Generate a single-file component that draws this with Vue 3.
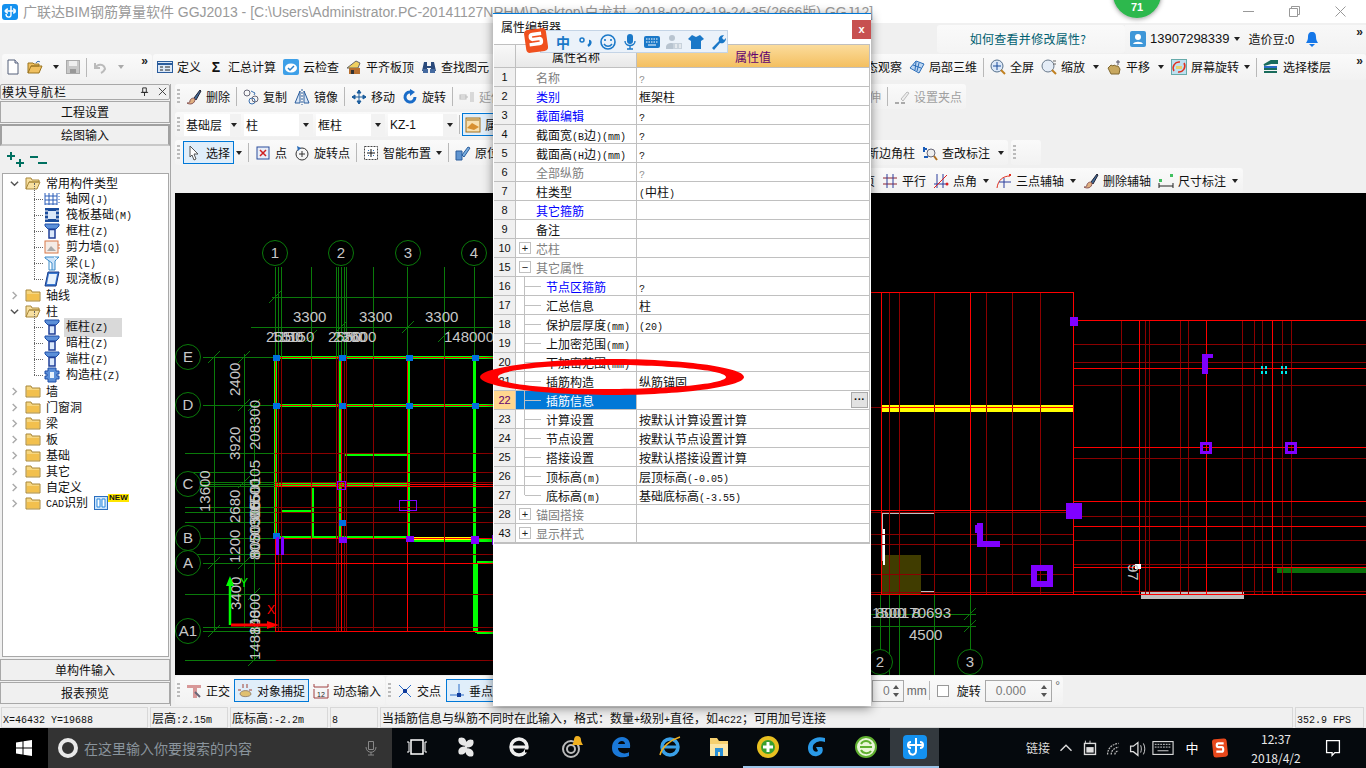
<template>
  <div class="app">
    <header class="titlebar">
      <svg class="app-logo" viewBox="0 0 16 16" v-html="icons.glodon" />
      <span class="title-text">广联达BIM钢筋算量软件 GGJ2013 - [C:\Users\Administrator.PC-20141127NRHM\Desktop\白龙村_2018-02-02-19-24-35(2666版).GGJ12]</span>
      <div class="win-btns">
        <svg viewBox="0 0 11 11"><path d="M0 5.500h11" stroke="#999" fill="none" /></svg>
        <svg viewBox="0 0 11 11"><path d="M.5 2.500h8v8h-8zM2.500 2.500v-2h8v8h-2" stroke="#999" fill="none" /></svg>
        <svg viewBox="0 0 11 11"><path d="M.5.5l10 10M10.500.5l-10 10" stroke="#999" fill="none" /></svg>
      </div>
    </header>

    <div class="menubar">
      <div class="help-tab">如何查看并修改属性?</div>
      <div class="account">
        <svg class="ic" viewBox="0 0 16 16"><rect width="16" height="16" rx="2" fill="#3f97d8" /><circle cx="8" cy="6" r="3" fill="#fff" /><path d="M3 13c1-3 9-3 10 0z" fill="#fff" /></svg>
        <span class="phone">13907298339</span>
        <i class="caret phone-caret" />
        <span class="beans">造价豆:0</span>
        <svg class="ic bell" viewBox="0 0 16 16"><path d="M8 1c-3 0-4 2-4 5 0 3-1 4-2 6h12c-1-2-2-3-2-6 0-3-1-5-4-5z" fill="#1577e8" /><path d="M5 13h6l-3 3z" fill="#1577e8" /></svg>
        <span class="more menu-more">»</span>
      </div>
    </div>

    <div class="toprow">
      <div class="band band-files">
        <template v-for="(it, i) in fileTools" :key="i">
          <span v-if="it.sep" class="sep" />
          <div v-else class="tool">
            <svg class="ic" viewBox="0 0 16 16" v-html="icons[it.i]" />
            <i v-if="it.arrow" class="caret" :class="{ dim: it.dim }" />
          </div>
        </template>
        <span class="more">»</span>
      </div>
      <div class="band band-main">
        <template v-for="(it, i) in topLeft" :key="i">
          <div class="tool">
            <svg v-if="it.i" class="ic" viewBox="0 0 16 16" v-html="icons[it.i]" />
            <b v-else class="sigma">Σ</b>
            <span>{{ it.t }}</span>
          </div>
        </template>
      </div>
      <div class="band band-topright">
        <template v-for="(it, i) in topRight" :key="i">
          <span v-if="it.sep" class="sep" />
          <div v-else class="tool">
            <svg v-if="it.i" class="ic" viewBox="0 0 16 16" v-html="icons[it.i]" />
            <span v-if="it.t">{{ it.t }}</span>
            <i v-if="it.arrow" class="caret" :class="{ near: it.near }" />
          </div>
        </template>
        <span class="more">»</span>
      </div>
    </div>

    <div class="main">
      <aside class="nav">
        <div class="nav-head">
          <span>模块导航栏</span>
          <svg class="nav-pin" viewBox="0 0 10 10"><path d="M3 1h4v5H3zM1 6h8M5 6v4" stroke="#222" fill="none" /></svg>
          <svg class="nav-close" viewBox="0 0 10 10"><path d="M1 1l8 8M9 1L1 9" stroke="#333" fill="none" /></svg>
        </div>
        <div class="nav-btn">工程设置</div>
        <div class="nav-btn pressed">绘图输入</div>
        <div class="nav-tools">
          <svg viewBox="0 0 18 18"><path d="M0 5h8M4 1v8" stroke="#007060" stroke-width="2" /><path d="M9 12h8M13 8v8" stroke="#007060" stroke-width="2" /></svg>
          <svg viewBox="0 0 18 18"><path d="M0 6h8" stroke="#007060" stroke-width="2" /><path d="M8 12h9" stroke="#007060" stroke-width="2" /></svg>
        </div>
        <div class="tree">
          <div v-for="(n, i) in tree" :key="i" class="node" :class="{ sub: n.lv === 1 }">
            <template v-if="n.lv === 0">
              <svg class="chev" viewBox="0 0 10 10"><path :d="n.open ? 'M1 3l4 4 4-4' : 'M3 1l4 4-4 4'" :stroke="n.open ? '#555' : '#aaa'" stroke-width="1.600" fill="none" /></svg>
              <svg class="ic folder" viewBox="0 0 16 16" v-html="n.open ? icons.folderOpen : icons.folder" />
            </template>
            <svg v-else class="ic leaf" viewBox="0 0 16 16" v-html="icons[n.i]" />
            <span class="node-label" :class="{ picked: n.sel }">
              <span v-for="(p, k) in parts(n.t)" :key="k" :class="{ lat: isLat(p) }">{{ p }}</span>
            </span>
            <template v-if="n.isNew">
              <svg class="cad-ic" viewBox="0 0 14 14"><rect x=".5" y=".5" width="13" height="13" fill="#cde4fa" stroke="#2a6fc0" /><path d="M3 3h3v8H3zM8 3h3v8H8z" fill="#fff" stroke="#2a8ae0" /></svg>
              <span class="new-tag">NEW</span>
            </template>
          </div>
        </div>
        <div class="nav-btn low">单构件输入</div>
        <div class="nav-btn">报表预览</div>
      </aside>

      <section class="work">
        <div v-for="(row, r) in rows" :key="r" class="tbrow">
          <div v-for="(band, b) in row" :key="b" class="band" :class="band.cls">
            <span v-if="band.grip" class="grip" />
            <template v-for="(it, i) in band.items" :key="i">
              <span v-if="it.sep" class="sep" />
              <div v-else-if="it.combo" class="combo" :class="{ latin: it.latin, short: it.short }">
                <span>{{ it.combo }}</span><i class="caret" />
              </div>
              <div v-else class="tool" :class="{ on: it.on, faded: it.faded, 'arrow-only': it.arrowOnly }">
                <svg v-if="it.i" class="ic" viewBox="0 0 16 16" v-html="icons[it.i]" />
                <span v-if="it.t">{{ it.t }}</span>
                <i v-if="it.arrow" class="caret" :class="{ near: it.near }" />
              </div>
            </template>
          </div>
        </div>

        <svg class="canvas" viewBox="175 193 1191 482">
          <g shape-rendering="crispEdges" transform="translate(.5 .5)">
            <rect x="880" y="554" width="40" height="39" fill="#403c00" />
            <path v-for="(l, i) in greenThick" :key="'t' + i" :d="l" stroke="#00ff00" stroke-width="3" fill="none" />
            <rect x="880" y="404" width="193" height="7" fill="#ffff00" />
            <rect x="408" y="536" width="66" height="3" fill="#ffff00" />
            <rect x="1276" y="567" width="90" height="5" fill="#0a700a" />
            <rect x="1140" y="591" width="103" height="7" fill="#c0c0c0" />
            <path d="M934 512H881V560M934 591H920" stroke="#c0c0c0" stroke-width="2" fill="none" />
            <path d="M883 528V564" stroke="#fff" stroke-width="2" fill="none" />
            <path v-for="(l, i) in darkGreen" :key="'g' + i" :d="l" stroke="#0a7a0a" fill="none" />
            <path v-for="(l, i) in darkRed" :key="'d' + i" :d="l" stroke="#8b0000" fill="none" />
            <path v-for="(l, i) in brightRed" :key="'r' + i" :d="l" stroke="#ff0000" fill="none" />
            <rect v-for="(p, i) in blueMarks" :key="'b' + i" :x="p[0] - 3" :y="p[1] - 3" width="7" height="6" fill="#0070e0" />
            <path d="M1069 316h8v9h-8zM1065 502h16v16h-16zM1201 353h11v4h-5v16h-6zM976 522h6v18h17v6h-23v-14h-2v-8h2zM275 536h3v18h-3zM280 536h3v18h-3zM338 536h8v6h-8zM405 535h8v6h-8zM470 535h8v8h-8zM491 534h3v10h-3z" fill="#7f00ff" />
            <path d="M1201 443h9v9h-9zM1286 443h9v9h-9z" stroke="#7f00ff" stroke-width="3" fill="none" />
            <path d="M1033 567h16v16h-16z" stroke="#7f00ff" stroke-width="6" fill="none" />
            <path d="M399 500h17v10h-17zM337 481h8v8h-8z" stroke="#7f00ff" stroke-width="1.500" fill="none" />
            <path d="M1260 365h2v3h-2zM1264 365h2v3h-2zM1260 370h2v3h-2zM1264 370h2v3h-2zM1280 365h2v3h-2zM1284 365h2v3h-2zM1280 370h2v3h-2zM1284 370h2v3h-2z" fill="#00e8e8" />
            <rect x="1134" y="563" width="6" height="5" fill="#fff" />
          </g>
          <path v-for="(t, i) in ticks" :key="'k' + i" :d="`M${t[0] - 6} ${t[1] + 6}L${t[0] + 6} ${t[1] - 6}`" stroke="#0a7a0a" fill="none" />
          <g v-for="(c, i) in bubbles" :key="'c' + i">
            <circle :cx="c.x" :cy="c.y" r="12.500" fill="#000" stroke="#0a7a0a" />
            <text class="dim bubble" :x="c.x" :y="c.y + 5">{{ c.t }}</text>
          </g>
          <text v-for="(t, i) in dimsH" :key="'h' + i" class="dim" :x="t[0]" :y="t[1]">{{ t[2] }}</text>
          <text v-for="(t, i) in dimsV" :key="'v' + i" class="dim" :transform="`rotate(-90 ${t[0]} ${t[1]})`" :x="t[0]" :y="t[1]">{{ t[2] }}</text>
          <text class="dim" transform="rotate(90 1128 564)" x="1128" y="564">97</text>
          <path d="M230 625V583" stroke="#00ff00" stroke-width="2.500" fill="none" /><path d="M230 576l-4 10h8z" fill="#00ff00" />
          <path d="M231 625h36" stroke="#ff0000" stroke-width="3" fill="none" /><path d="M279 625l-12-4v8z" fill="#ff0000" />
          <text class="axis axis-y" x="240" y="587">Y</text>
          <text class="axis axis-x" x="267" y="614">X</text>
        </svg>

        <div class="tbrow bottomrow">
          <div class="band bb-a">
            <span class="grip" />
            <div v-for="it in bottomA" :key="it.t" class="tool" :class="{ on: it.on }">
              <svg class="ic" viewBox="0 0 16 16" v-html="icons[it.i]" /><span>{{ it.t }}</span>
            </div>
          </div>
          <div class="band bb-b">
            <span class="grip" />
            <div v-for="it in bottomB" :key="it.t" class="tool" :class="{ on: it.on }">
              <svg class="ic" viewBox="0 0 16 16" v-html="icons[it.i]" /><span>{{ it.t }}</span>
            </div>
          </div>
          <div class="band bb-c">
            <div class="spin small"><span>0</span><svg class="spin-arrows" viewBox="0 0 6 14"><path d="M3 1l3 4H0zM3 13L0 9h6z" fill="#555" /></svg></div>
            <span class="unit">mm</span>
            <span class="sep" />
            <span class="check" />
            <span class="rot-label">旋转</span>
            <div class="spin"><span>0.000</span><svg class="spin-arrows" viewBox="0 0 6 14"><path d="M3 1l3 4H0zM3 13L0 9h6z" fill="#555" /></svg></div>
            <span class="unit deg">°</span>
          </div>
        </div>
      </section>
    </div>

    <footer class="status">
      <div v-for="(c, i) in statusCells" :key="i" class="cell" :class="c.cls">
        <span v-for="(p, k) in parts(c.t)" :key="k" :class="{ lat: isLat(p) }">{{ p }}</span>
      </div>
    </footer>

    <div class="taskbar">
      <div class="start">
        <svg viewBox="0 0 16 16"><path d="M0 2.500l6.500-1v6H0zM7.500 1.300L16 0v7.500H7.500zM0 8.500h6.500v6l-6.500-1zM7.500 8.500H16V16l-8.500-1.300z" fill="#fff" /></svg>
      </div>
      <div class="search">
        <span class="cortana" />
        <span class="search-text">在这里输入你要搜索的内容</span>
        <svg viewBox="0 0 16 16"><path d="M5.500 1.500h5v8h-5zM3 7c0 7 10 7 10 0M8 12v3M5 15h6" stroke="#888" fill="none" /></svg>
      </div>
      <div v-for="s in taskSlots" :key="s.i" class="slot" :class="s.cls">
        <svg viewBox="0 0 24 24" v-html="taskIcons[s.i]" />
      </div>
      <div class="tray">
        <span class="tray-text">链接</span>
        <svg class="t24" viewBox="0 0 24 24" v-html="taskIcons.up" />
        <svg class="t24" viewBox="0 0 24 24" v-html="taskIcons.power" />
        <svg class="t24" viewBox="0 0 24 24" v-html="taskIcons.wifi" />
        <svg class="t22" viewBox="0 0 24 24" v-html="taskIcons.sound" />
        <svg class="t30" viewBox="0 0 24 24" v-html="taskIcons.kb" />
        <span class="tray-zh">中</span>
        <svg class="t28" viewBox="0 0 24 24" v-html="taskIcons.sg" />
        <div class="clock"><span>12:37</span><span>2018/4/2</span></div>
        <svg class="t28 notif" viewBox="0 0 24 24" v-html="taskIcons.note" />
      </div>
    </div>

    <div class="badge71"><span>71</span></div>

    <div class="dialog">
      <div class="dlg-title">
        <span>属性编辑器</span>
        <div class="dlg-close">x</div>
      </div>
      <div class="grid">
        <div class="grow head">
          <div class="gnum" />
          <div class="gname hname">属性名称</div>
          <div class="gval hval">属性值</div>
        </div>
        <div v-for="r in props" :key="r.n" class="grow" :class="{ selected: r.sel }">
          <div class="gnum">{{ r.n }}</div>
          <div class="gname" :class="[r.c, { child: r.sub, lastchild: r.end }]">
            <span v-if="r.box" class="xbox">{{ r.box }}</span>
            <span v-for="(p, k) in parts(r.t)" :key="k" :class="{ lat: isLat(p) }">{{ p }}</span>
          </div>
          <div class="gval" :class="{ soft: r.c === 'grey' }">
            <span v-for="(p, k) in parts(r.v || '')" :key="k" :class="{ lat: isLat(p) }">{{ p }}</span>
            <span v-if="r.sel" class="ell">···</span>
          </div>
        </div>
      </div>
    </div>

    <div class="sogou">
      <span class="sg-zh">中</span>
      <svg v-for="g in sogouIcons" :key="g" class="sg-ic" viewBox="0 0 16 16" v-html="sogouGlyphs[g]" />
    </div>
    <svg class="sg-logo" viewBox="0 0 24 27">
      <rect x="1" y="2" width="22" height="23" rx="4" fill="#f0501e" transform="rotate(-8 12 13)" />
      <path d="M18 7H9c-3 0-3 5 0 5h6c3 0 3 5 0 5H5" stroke="#fff" stroke-width="3.400" fill="none" transform="rotate(-8 12 13)" />
    </svg>

    <svg class="ring" viewBox="0 0 272 38">
      <path d="M4 19C4 9 70 1 136 1s132 8 132 18-66 18-132 18S4 29 4 19zM22 19c0 7 50 12 110 12s118-5 118-12-58-12-118-12S22 12 22 19z" fill="#ff0000" fill-rule="evenodd" />
    </svg>
  </div>
</template>

<script setup>
const parts = (t) => t.match(/[\x00-\x7f]+|[^\x00-\x7f]+/g) || [];
const isLat = (p) => p.charCodeAt(0) < 128;

const icons = {
  glodon: '<rect width="16" height="16" rx="3" fill="#1491ef"/><path d="M9 2v9c0 3-5 3-5-1M2.500 7h11M6 5c-3 0-3 4 0 4M11 5c3 0 3 4 0 4" stroke="#fff" stroke-width="1.400" fill="none"/>',
  new: '<path d="M3 1h7l3 3v11H3z" fill="#fff" stroke="#55607a"/><path d="M10 1v3h3" fill="#dde" stroke="#55607a"/>',
  open: '<path d="M1 14V4h5l1 1h5v2H4L1 14h11l3-7H4" fill="#f0c060" stroke="#9a7420"/><path d="M9 4c1-2 3-2 4-1" stroke="#3a70b0" fill="none"/>',
  save: '<rect x="1.500" y="1.500" width="13" height="13" fill="#c8c8c8" stroke="#aaa"/><rect x="4" y="2" width="8" height="5" fill="#eee"/><rect x="5" y="10" width="6" height="4" fill="#999"/>',
  undo: '<path d="M3 4v5h5M3 9c3-5 9-4 10 1-1 2-2 3-4 4" stroke="#bbb" stroke-width="2" fill="none"/>',
  define: '<rect x=".5" y="2.500" width="15" height="11" fill="#dbe8f8" stroke="#2a5c9c"/><path d="M1 5h14" stroke="#2a5c9c" stroke-width="2"/><path d="M3 8h3M3 11h3M8 8h5M8 11h5" stroke="#222"/>',
  cloud: '<rect width="16" height="16" rx="2" fill="#3ea0e8"/><ellipse cx="8" cy="9" rx="6" ry="4.500" fill="#fff"/><path d="M5 9l2 2 4-4" stroke="#2a80c8" stroke-width="1.500" fill="none"/>',
  flat: '<path d="M1 9l9-7 4 2-2 5z" fill="#f0d060" stroke="#666"/><rect x="3" y="9" width="11" height="6" fill="#b87030"/><rect x="5" y="11" width="3" height="4" fill="#333"/>',
  find: '<path d="M3 3h3v4h4V3h3l2 9h-5V9H6v3H1z" fill="#2a4a7c"/><rect x="2" y="10" width="5" height="4" fill="#456aa0"/><rect x="9" y="10" width="5" height="4" fill="#456aa0"/>',
  brush: '<path d="M8 9l6-8 1 1-5 9z" fill="#406a98" stroke="#223"/><path d="M9 10c-2-2-5 0-5 2s-2 2-3 2c3 2 8 1 8-4z" fill="#e0b080" stroke="#855"/>',
  copy: '<circle cx="4" cy="4" r="3" fill="none" stroke="#667"/><circle cx="9" cy="12" r="3" fill="none" stroke="#3a70b0"/><circle cx="12" cy="10" r="3" fill="none" stroke="#667"/><path d="M8 2l4 2-1 2" stroke="#3a70b0" fill="none"/>',
  mirror: '<path d="M1 14L6 2v12zM15 14L10 2v12z" fill="#d8e6f6" stroke="#2a5c9c"/><path d="M8 0v16" stroke="#2a5c9c" stroke-dasharray="2 1"/>',
  move: '<path d="M8 1v14M1 8h14M8 1L6 4h4zM8 15l-2-3h4zM1 8l3-2v4zM15 8l-3-2v4z" fill="#1a5c9c" stroke="#1a5c9c"/>',
  rotate: '<path d="M13 8a5 5 0 1 1-3-4.600" stroke="#1a6cc8" stroke-width="3" fill="none"/><path d="M8 0l5 3-5 4z" fill="#1a6cc8"/>',
  extend: '<path d="M1 8h8M12 3v10M14 3v10" stroke="#bbb" fill="none"/><rect x="1" y="6" width="6" height="4" fill="none" stroke="#bbb"/>',
  setgrip: '<path d="M7 10l6-7 2 1-6 8z" fill="#eee" stroke="#bbb"/><path d="M1 14h4M7 14h4" stroke="#aaa" stroke-width="2"/>',
  cursor: '<path d="M4 1l8 8H8l2 5-2 1-2-5-2 2z" fill="#fff" stroke="#555"/>',
  point: '<rect x="2" y="2" width="12" height="12" fill="#e8eef8" stroke="#2a4c9c"/><path d="M5 5l6 6M11 5l-6 6" stroke="#d02020" stroke-width="1.500"/>',
  rotpoint: '<circle cx="8" cy="9" r="6" fill="none" stroke="#333"/><path d="M8 6v6M5 9h6" stroke="#333"/><path d="M3 1l4 2-3 3z" fill="#2a6cb8"/>',
  smart: '<rect x="1.500" y="1.500" width="13" height="13" fill="#fff" stroke="#444" stroke-dasharray="2 1"/><path d="M8 4v8M4 8h8" stroke="#111"/><path d="M5 5h1v1H5zM10 10h1v1h-1zM10 5h1v1h-1zM5 10h1v1H5z" fill="#2a6cb8"/>',
  origin: '<path d="M1 6h6v9H1z" fill="#5f94d0" stroke="#2a5c9c"/><path d="M7 10l6-8 2 1-6 9z" fill="#7ab0e0" stroke="#2a5c9c"/>',
  layer: '<rect x="1" y="1" width="14" height="14" fill="#f8e0b0" stroke="#a07020"/><path d="M2 3h12" stroke="#a07020"/><path d="M2 11l5-5 7 4-5 3z" fill="#d89030"/>',
  orbit: '<path d="M1 9l6-7 8 3-5 9z" fill="#bcd6f2" stroke="#2a6cb8"/><path d="M4 6l8 3M7 3l-1 8M10 4l-2 8" stroke="#2a6cb8"/>',
  full: '<circle cx="7" cy="7" r="6" fill="#dbe8f8" stroke="#56708c"/><path d="M7 3v8M3 7h8" stroke="#1a4c9c"/><path d="M11 11l4 4" stroke="#c08020" stroke-width="2"/>',
  zoom: '<circle cx="7" cy="7" r="6" fill="#e4ecf6" stroke="#6a7a8c"/><path d="M11 11l4 4" stroke="#c08020" stroke-width="2"/><path d="M12 2h3M12 5h3" stroke="#666"/>',
  pan: '<path d="M2 9l3-3 2 1 1-1 2 1 2 0 2 3-1 5H5z" fill="#c8a860" stroke="#806830"/><path d="M12 1v5M10 3h4" stroke="#556"/>',
  screen: '<rect x=".5" y=".5" width="15" height="15" fill="#bfe0f0" stroke="#6aa"/><path d="M3 12a6 6 0 0 1 6-9M13 4a6 6 0 0 1-6 9" stroke="#e03020" stroke-width="1.500" fill="none"/><rect x="5" y="7" width="6" height="3" fill="#e8d070"/>',
  floor: '<path d="M1 6l7-4h6v2H8zM1 10h13M1 13h13" stroke="#1a6c5c" stroke-width="2" fill="none"/><path d="M1 8h13" stroke="#2a6cc8" stroke-width="2"/>',
  audit: '<path d="M2 2v5M2 4h3M2 12h4" stroke="#1a5cb8" stroke-width="2" fill="none"/><circle cx="9" cy="8" r="4" fill="#eee" stroke="#667"/><path d="M12 11l3 4" stroke="#b07020" stroke-width="2"/>',
  parallel: '<path d="M1 5h14M1 11h14" stroke="#8c2030" fill="none"/><path d="M5 1v14M11 1v14" stroke="#2a3c9c" fill="none"/>',
  angle: '<path d="M4 1v14M10 1v14M1 11h14" stroke="#2a3c9c" fill="none"/><path d="M1 15L14 2" stroke="#e02020"/><circle cx="14" cy="11" r="1.500" fill="#e02020"/>',
  arc: '<path d="M1 15C2 7 7 3 14 3" stroke="#e03020" fill="none"/><path d="M8 5v10M3 9h12" stroke="#2a3c9c" fill="none"/><rect x="13" y="1" width="2" height="2" fill="#e03020"/>',
  dim: '<path d="M1 10v5M15 10v5M1 13h14" stroke="#222" fill="none"/><rect x="1" y="6" width="3" height="3" fill="#40c060"/><rect x="12" y="1" width="3" height="3" fill="#40c060"/>',
  ortho: '<path d="M1 2h14v3H11v10H7V5H1z" fill="#d89898"/><path d="M9 9l5 5" stroke="#667" stroke-width="2"/>',
  snap: '<path d="M1 7h3M12 7h3M6 1v4M10 1v4" stroke="#a04030" fill="none"/><path d="M3 11c0-4 10-5 11 0 0 3-10 4-11 0z" fill="#e0c070" stroke="#987"/>',
  dyn: '<path d="M1 1v3h14V1M1 6v9h14V6" stroke="#a04040" fill="none"/><text x="4" y="14" font-size="7" font-family="Liberation Sans" fill="#222">12</text>',
  cross: '<path d="M2 2l12 12M14 2L2 14" stroke="#2a6cc8"/><rect x="6" y="6" width="4" height="4" fill="#103c9c"/>',
  perp: '<path d="M1 12h14M10 1v11" stroke="#2a6cc8"/><rect x="8" y="10" width="4" height="4" fill="#103c9c"/>',
  folder: '<path d="M1 3h5l1 2h8v9H1z" fill="#f6d680" stroke="#a8873a"/><path d="M2 7h12v6H2z" fill="#f2c04e"/>',
  folderOpen: '<path d="M1 14V3h5l1 2h7v2H4L1 14h11l3-7H4" fill="#f8e0a0" stroke="#a8873a"/>',
  grid: '<path d="M1 2v12M5 2v12M9 2v12M13 2v12M1 5h12M1 9h12M1 13h12" stroke="#2a5cb8" fill="none"/><path d="M15 2v12" stroke="#2a5cb8" stroke-dasharray="1 2"/>',
  raft: '<rect x="1" y="1" width="14" height="14" fill="#1a4c9c"/><rect x="4" y="4" width="8" height="8" fill="#dbe8f8"/><path d="M1 4h3M1 8h3M1 12h3M12 4h3M12 8h3M12 12h3" stroke="#fff"/>',
  pillar: '<path d="M1 1h14v2l-3 3H4L1 3z" fill="#5b8fd8" stroke="#1f4fa8"/><path d="M5 6.500h6v8.500H5z" fill="#dbe9fb" stroke="#1f3f98" stroke-width="1.500"/>',
  wall: '<rect x="1" y="2" width="13" height="12" fill="#f4ece6" stroke="#d87848"/><path d="M3 12l4-5 5 5z" fill="#aaa"/><path d="M15 5v6" stroke="#d87848" stroke-dasharray="2 1"/>',
  beam: '<path d="M1 2h14l-4 4v9H8V8L1 3z" fill="#cde4fa" stroke="#3a8ac8"/><path d="M5 6v9h3" stroke="#3a8ac8" fill="none"/><path d="M10 2l4 3" stroke="#fff"/>',
  slab: '<path d="M4 1h11l-3 14H1z" fill="#3a78d0" stroke="#1a3c88"/><path d="M5 3h8l-2 10H3z" fill="#e8f2fc"/>',
  cons: '<path d="M4 1h8v3h3v3h-2v2h2v3h-3v3H4v-3H1V9h2V7H1V4h3z" fill="#5b8fd8" stroke="#1f4fa8"/><rect x="6" y="5" width="4" height="6" fill="#e8f2fc"/>'
};

const fileTools = [
  { i: 'new' },
  { i: 'open', arrow: true },
  { i: 'save' },
  { sep: true },
  { i: 'undo', arrow: true, dim: true }
];
const topLeft = [
  { i: 'define', t: '定义' },
  { t: '汇总计算' },
  { i: 'cloud', t: '云检查' },
  { i: 'flat', t: '平齐板顶' },
  { i: 'find', t: '查找图元' }
];
const topRight = [
  { t: '动态观察' },
  { i: 'orbit', t: '局部三维' },
  { sep: true },
  { i: 'full', t: '全屏' },
  { i: 'zoom', t: '缩放', arrow: true },
  { i: 'pan', t: '平移', arrow: true },
  { i: 'screen', t: '屏幕旋转', arrow: true, near: true },
  { sep: true },
  { i: 'floor', t: '选择楼层' }
];

const rows = [
  [
    {
      grip: true,
      cls: 'left-band',
      items: [
        { i: 'brush', t: '删除' },
        { sep: true },
        { i: 'copy', t: '复制' },
        { i: 'mirror', t: '镜像' },
        { sep: true },
        { i: 'move', t: '移动' },
        { i: 'rotate', t: '旋转' },
        { sep: true },
        { i: 'extend', t: '延伸', faded: true }
      ]
    },
    {
      cls: 'right-band mr400',
      items: [{ t: '延伸', faded: true }, { sep: true }, { i: 'setgrip', t: '设置夹点', faded: true }]
    }
  ],
  [
    {
      grip: true,
      cls: 'left-band tight',
      items: [
        { combo: '基础层', short: true },
        { combo: '柱' },
        { combo: '框柱' },
        { combo: 'KZ-1', latin: true },
        { sep: true },
        { i: 'layer', t: '属性', on: true }
      ]
    }
  ],
  [
    {
      grip: true,
      cls: 'left-band',
      items: [
        { i: 'cursor', t: '选择', on: true },
        { arrowOnly: true, arrow: true },
        { sep: true },
        { i: 'point', t: '点' },
        { i: 'rotpoint', t: '旋转点' },
        { sep: true },
        { i: 'smart', t: '智能布置', arrow: true, near: true },
        { sep: true },
        { i: 'origin', t: '原位标注' }
      ]
    },
    { cls: 'right-band mr358', items: [{ t: '新边角柱' }, { i: 'audit', t: '查改标注', arrow: true }] },
    { grip: true, cls: 'stub', items: [] }
  ],
  [
    {
      cls: 'right-band mr123',
      items: [
        { t: '页' },
        { i: 'parallel', t: '平行' },
        { i: 'angle', t: '点角', arrow: true },
        { i: 'arc', t: '三点辅轴', arrow: true },
        { i: 'brush', t: '删除辅轴' },
        { i: 'dim', t: '尺寸标注', arrow: true }
      ]
    }
  ]
];

const bottomA = [
  { i: 'ortho', t: '正交' },
  { i: 'snap', t: '对象捕捉', on: true },
  { i: 'dyn', t: '动态输入' }
];
const bottomB = [
  { i: 'cross', t: '交点' },
  { i: 'perp', t: '垂点', on: true }
];

const treeData = [
  ['常用构件类型', 0, 1],
  ['轴网(J)', 1, 0, 'grid'],
  ['筏板基础(M)', 1, 0, 'raft'],
  ['框柱(Z)', 1, 0, 'pillar'],
  ['剪力墙(Q)', 1, 0, 'wall'],
  ['梁(L)', 1, 0, 'beam'],
  ['现浇板(B)', 1, 0, 'slab'],
  ['轴线', 0, 0],
  ['柱', 0, 1],
  ['框柱(Z)', 1, 0, 'pillar', 'sel'],
  ['暗柱(Z)', 1, 0, 'pillar'],
  ['端柱(Z)', 1, 0, 'pillar'],
  ['构造柱(Z)', 1, 0, 'cons'],
  ['墙', 0, 0],
  ['门窗洞', 0, 0],
  ['梁', 0, 0],
  ['板', 0, 0],
  ['基础', 0, 0],
  ['其它', 0, 0],
  ['自定义', 0, 0],
  ['CAD识别', 0, 0]
];
const tree = treeData.map((d) => ({
  t: d[0],
  lv: d[1],
  open: d[2] === 1,
  i: d[3],
  sel: d[4] === 'sel',
  isNew: d[0] === 'CAD识别'
}));

const ys = { E: 357, D: 405, C: 484, B: 538, A: 563, A1: 631 };
const hl = (y, a, b) => `M${a} ${y}H${b}`;
const vl = (x, a, b) => `M${x} ${a}V${b}`;

const bubbles = [
  { t: '1', x: 275, y: 253 },
  { t: '2', x: 341, y: 253 },
  { t: '3', x: 408, y: 253 },
  { t: '4', x: 474, y: 253 },
  { t: 'E', x: 188, y: ys.E },
  { t: 'D', x: 188, y: ys.D },
  { t: 'C', x: 188, y: ys.C },
  { t: 'B', x: 188, y: ys.B },
  { t: 'A', x: 188, y: ys.A },
  { t: 'A1', x: 188, y: ys.A1 },
  { t: '2', x: 880, y: 662 },
  { t: '3', x: 970, y: 662 }
];

const greenThick = [
  hl(357, 275, 493),
  hl(405, 275, 493),
  vl(275, 357, 538),
  vl(340, 357, 538),
  vl(408, 357, 538),
  vl(474, 357, 630),
  hl(454, 344, 408),
  hl(484, 275, 408),
  hl(511, 280, 312),
  vl(312, 487, 538),
  hl(537, 275, 408),
  hl(540, 408, 493),
  hl(562, 476, 493),
  vl(476, 562, 632),
  hl(632, 476, 493)
];

const darkGreen = [
  ...[275, 278, 281, 311, 336, 338, 341, 344, 346, 373, 407, 444, 474].map((x) => vl(x, 266, 357)),
  hl(297, 271, 493),
  hl(327, 250, 493),
  vl(214, 357, 631),
  vl(244, 353, 627),
  vl(254, 403, 660),
  hl(ys.E, 202, 275),
  hl(ys.D, 202, 275),
  ...[453, 472, 482, 484, 486, 507, 512, 522, 538, 554, 594].map((y) => hl(y, 184, 275)),
  hl(563, 202, 275),
  hl(627, 202, 275),
  hl(631, 202, 275),
  hl(660, 184, 275),
  hl(614, 870, 975),
  hl(626, 870, 975),
  ...[880, 889, 899, 934, 970].map((x) => vl(x, 594, 675))
];

const darkRed = [
  ...[278, 281, 311, 336, 338, 344, 346, 373, 444].map((x) => vl(x, 357, 631)),
  ...[453, 472, 482, 507, 512, 522, 554, 594, 627, 660].map((y) => hl(y, 275, 496)),
  ...[889, 899, 934, 986, 1012, 1040].map((x) => vl(x, 292, 594)),
  hl(407, 870, 880),
  ...[512, 534, 544, 574, 592].map((y) => hl(y, 870, 1073)),
  ...[344, 362, 385, 458, 516, 540, 564, 591].map((y) => hl(y, 1073, 1366)),
  ...[1121, 1145, 1149, 1180, 1188, 1242, 1254, 1262, 1282, 1291].map((x) => vl(x, 320, 594))
];

const brightRed = [
  hl(357, 275, 493),
  hl(405, 275, 493),
  hl(484, 275, 496),
  hl(486, 275, 496),
  hl(538, 275, 496),
  hl(563, 275, 496),
  hl(631, 275, 496),
  vl(275, 357, 631),
  vl(341, 357, 631),
  vl(407, 357, 631),
  hl(292, 870, 1073),
  vl(1073, 292, 594),
  vl(881, 292, 594),
  vl(970, 292, 594),
  hl(407, 880, 1073),
  hl(510, 870, 1073),
  hl(594, 870, 1366),
  hl(320, 1073, 1366),
  hl(368, 1073, 1366),
  hl(447, 1073, 1366),
  hl(501, 1073, 1366),
  hl(526, 1073, 1366),
  hl(567, 1073, 1366),
  vl(1139, 320, 594),
  vl(1206, 320, 594),
  vl(1272, 320, 594)
];

const blueMarks = [275, 341, 408, 474].flatMap((x) => [[x, 357], [x, 405]]).concat([[341, 522], [275, 535]]);

const ticks = [
  [275, 297], [341, 327], [408, 327], [311, 336], [444, 336], [214, 357], [244, 357],
  [244, 405], [254, 405], [244, 482], [214, 563], [244, 563], [254, 594], [214, 631], [254, 660],
  [970, 614], [970, 626]
];

const dimsH = [
  [293, 322, '3300'], [359, 322, '3300'], [425, 322, '3300'],
  [266, 342, '2550'], [271, 342, '1150'], [282, 342, '1150'], [328, 342, '2550'], [333, 342, '2300'], [343, 342, '2600'],
  [444, 342, '148000'],
  [872, 618, '1500'], [876, 618, '800'], [901, 618, '170693'], [912, 618, '8'],
  [909, 640, '4500']
];
const dimsV = [
  [240, 396, '2400'], [240, 460, '3920'], [240, 523, '2680'], [240, 563, '1200'], [241, 610, '3400'],
  [210, 512, '13600'],
  [260, 450, '208300'], [260, 510, '550105'], [260, 520, '01500'], [260, 558, '8080505'], [260, 560, '8050300'],
  [260, 635, '14800'], [260, 660, '148800']
];

const props = [
  { n: 1, t: '名称', v: '?', c: 'grey' },
  { n: 2, t: '类别', v: '框架柱', c: 'blue' },
  { n: 3, t: '截面编辑', v: '?', c: 'blue' },
  { n: 4, t: '截面宽(B边)(mm)', v: '?' },
  { n: 5, t: '截面高(H边)(mm)', v: '?' },
  { n: 6, t: '全部纵筋', v: '?', c: 'grey' },
  { n: 7, t: '柱类型', v: '(中柱)' },
  { n: 8, t: '其它箍筋', c: 'blue' },
  { n: 9, t: '备注' },
  { n: 10, t: '芯柱', box: '+', c: 'grey' },
  { n: 15, t: '其它属性', box: '−', c: 'grey' },
  { n: 16, t: '节点区箍筋', v: '?', c: 'blue', sub: true },
  { n: 17, t: '汇总信息', v: '柱', sub: true },
  { n: 18, t: '保护层厚度(mm)', v: '(20)', sub: true },
  { n: 19, t: '上加密范围(mm)', sub: true },
  { n: 20, t: '下加密范围(mm)', sub: true },
  { n: 21, t: '插筋构造', v: '纵筋锚固', sub: true },
  { n: 22, t: '插筋信息', sub: true, sel: true },
  { n: 23, t: '计算设置', v: '按默认计算设置计算', sub: true },
  { n: 24, t: '节点设置', v: '按默认节点设置计算', sub: true },
  { n: 25, t: '搭接设置', v: '按默认搭接设置计算', sub: true },
  { n: 26, t: '顶标高(m)', v: '层顶标高(-0.05)', sub: true },
  { n: 27, t: '底标高(m)', v: '基础底标高(-3.55)', sub: true, end: true },
  { n: 28, t: '锚固搭接', box: '+', c: 'grey' },
  { n: 43, t: '显示样式', box: '+', c: 'grey' }
];

const statusCells = [
  { t: 'X=46432 Y=19688', cls: 'c1' },
  { t: '层高:2.15m', cls: 'c2' },
  { t: '底标高:-2.2m', cls: 'c3' },
  { t: '8', cls: 'c4' },
  { t: '当插筋信息与纵筋不同时在此输入，格式：数量+级别+直径，如4C22；可用加号连接', cls: 'c5' },
  { t: '352.9 FPS', cls: 'c6' }
];

const sogouIcons = ['dot', 'smile', 'mic', 'kb', 'user', 'shirt', 'wrench'];
const sogouGlyphs = {
  dot: '<circle cx="4" cy="6" r="2" fill="none" stroke="#1a78c8" stroke-width="1.500"/><path d="M11 7c2 0 2 3-1 5" stroke="#1a78c8" stroke-width="2.500" fill="none"/>',
  smile: '<circle cx="8" cy="8" r="7" fill="none" stroke="#1a78c8" stroke-width="1.600"/><path d="M5 5v2M11 5v2" stroke="#1a78c8" stroke-width="1.600"/><path d="M4 10c2 3 6 3 8 0" stroke="#1a78c8" stroke-width="1.400" fill="none"/>',
  mic: '<rect x="5" y="0" width="6" height="10" rx="3" fill="#1a78c8"/><path d="M3 7c0 6 10 6 10 0M8 12v3M5 15h6" stroke="#1a78c8" stroke-width="1.400" fill="none"/>',
  kb: '<rect y="2" width="16" height="12" rx="2" fill="#1a78c8"/><path d="M2 5h12M2 8h12" stroke="#fff" stroke-dasharray="1.500 1"/><path d="M4 11h8" stroke="#fff"/>',
  user: '<circle cx="6" cy="4" r="3" fill="#b8c4d0"/><path d="M0 13c0-5 10-5 10-1v3H0z" fill="#b8c4d0"/><rect x="7" y="9" width="9" height="6" fill="#c8d2dc"/><path d="M9 11h2M13 11h2M9 13h2M13 13h2" stroke="#fff"/>',
  shirt: '<path d="M4 1l4 2 4-2 4 4-3 2v8H3V7L0 5z" fill="#1a78c8"/>',
  wrench: '<path d="M2 14l7-7c-1-3 1-6 5-6l-2 3 2 2 2-2c0 4-3 6-6 5l-6 7z" fill="#1a78c8"/>'
};

const taskSlots = [
  { i: 'view' },
  { i: 'fan' },
  { i: 'ie0', cls: 'wide' },
  { i: 'swirl' },
  { i: 'edge' },
  { i: 'ie' },
  { i: 'files' },
  { i: 'plus', cls: 'running' },
  { i: 'gg', cls: 'running' },
  { i: 'ge', cls: 'running' },
  { i: 'app', cls: 'active' }
];
const taskIcons = {
  view: '<path d="M6 5h12v14H6z" fill="none" stroke="#fff" stroke-width="1.500"/><path d="M2 7h2v10H2M22 7h-2v10h2" fill="none" stroke="#fff"/>',
  fan: '<path d="M12 11C6 11 3 7 5 3c4-2 9 1 7 8zM13 12c0 6-4 9-8 7-2-4 1-9 8-7zM12 13c6 0 9 4 7 8-4 2-9-1-7-8zM11 12c0-6 4-9 8-7 2 4-1 9-8 7z" fill="#e8e8e8"/>',
  ie0: '<circle cx="12" cy="12" r="8" fill="none" stroke="#eee" stroke-width="3.500"/><path d="M5 12h14" stroke="#eee" stroke-width="3"/><path d="M18 16l5 0" stroke="#000" stroke-width="3"/>',
  swirl: '<circle cx="11" cy="14" r="8" fill="none" stroke="#bbb" stroke-width="2"/><circle cx="11" cy="14" r="4" fill="none" stroke="#bbb" stroke-width="2"/><path d="M17 1c-2 0-3 2-3 4 0 2-1 3-2 5h11c-1-2-2-3-2-5 0-2-1-4-4-4z" fill="#f0b020"/>',
  edge: '<path d="M3 13C3 6 8 2 13 2c6 0 9 5 8 11H9c0 5 7 7 11 4v4c-7 3-17 1-17-8zM9 9h7c0-4-6-4-7 0z" fill="#1a78d8"/>',
  ie: '<circle cx="12" cy="12" r="8" fill="none" stroke="#3aa0e8" stroke-width="3.500"/><path d="M5 12h14" stroke="#3aa0e8" stroke-width="3"/><path d="M2 20C4 12 12 5 22 2" stroke="#f0b020" stroke-width="1.500" fill="none"/>',
  files: '<path d="M3 3h7l2 3h9v15H3z" fill="#f6d070"/><rect x="3" y="9" width="18" height="12" fill="#fbe6a8"/><rect x="8" y="13" width="8" height="8" fill="#2a90d8"/><rect x="11" y="17" width="2" height="4" fill="#fbe6a8"/>',
  plus: '<circle cx="12" cy="12" r="11" fill="#e8c020"/><circle cx="12" cy="12" r="7" fill="#3aa030"/><path d="M12 7v10M7 12h10" stroke="#fff" stroke-width="3"/>',
  gg: '<path d="M20 3C10 0 3 6 3 13c0 6 5 9 9 8 5-1 7-5 5-9h-6l2 4c-3 2-6-1-5-5 1-3 6-6 12-4z" fill="#2a9ae8"/>',
  ge: '<circle cx="12" cy="12" r="10" fill="#eaf6d8"/><circle cx="12" cy="12" r="10" fill="none" stroke="#60b030" stroke-width="2"/><path d="M6 12h12M7 9c2-4 8-4 10 0M7 15c2 4 8 4 10 1" stroke="#60b030" stroke-width="2" fill="none"/>',
  app: '<rect x="0" y="0" width="24" height="24" rx="4" fill="#1491ef"/><path d="M13 3v13c0 5-7 5-7-1M4 10h16M8 7c-4 0-4 6 0 6M17 7c4 0 4 6 0 6" stroke="#fff" stroke-width="2" fill="none"/>',
  up: '<path d="M6 15l6-6 6 6" stroke="#ddd" stroke-width="1.500" fill="none"/>',
  power: '<rect x="6" y="7" width="12" height="12" fill="none" stroke="#ddd" stroke-width="1.500"/><rect x="8" y="11" width="8" height="6" fill="#ddd"/><path d="M7 4v3M12 4v3" stroke="#ddd"/>',
  wifi: '<path d="M5 19C5 13 9 8 17 7M9 19c0-4 3-7 8-8M13 19c0-2 1-3 4-4" stroke="#bbb" stroke-width="1.400" fill="none" stroke-dasharray="2 1"/>',
  sound: '<path d="M5 10h3l5-4v14l-5-4H5z" fill="none" stroke="#ddd" stroke-width="1.400"/><path d="M16 9c1 3 1 5 0 8M19 7c2 4 2 8 0 12" stroke="#ddd" fill="none"/>',
  kb: '<rect x="1" y="5" width="22" height="14" fill="none" stroke="#ddd" stroke-width="1.200"/><path d="M3 8h18M3 11h18" stroke="#ddd" stroke-dasharray="2 1"/><path d="M6 15h12" stroke="#ddd"/>',
  sg: '<rect x="4" y="2" width="16" height="20" rx="3" fill="#e8481c" transform="rotate(-6 12 12)"/><path d="M16 7H10c-2 0-2 4 0 4h4c2 0 2 5 0 5H8" stroke="#fff" stroke-width="2.400" fill="none"/>',
  note: '<path d="M5 4h14v13h-5l-3 3v-3H5z" fill="none" stroke="#fff" stroke-width="1.400"/>'
};
</script>

<style scoped>
.app {
  position: relative;
  display: flex;
  flex-direction: column;
  width: 1366px;
  height: 768px;
  overflow: hidden;
  background: #f0f0f0;
  color: #111;
  font: 12px/16px "Noto Sans CJK SC", "Liberation Sans", sans-serif;
}
.lat {
  font-family: "Liberation Mono", monospace;
  font-size: 10px;
}
.ic {
  flex: none;
  width: 16px;
  height: 16px;
}

/* title bar */
.titlebar {
  flex: none;
  display: flex;
  align-items: center;
  height: 23px;
  background: #fff;
  overflow: hidden;
}
.app-logo {
  flex: none;
  width: 16px;
  height: 16px;
  margin: 0 5px 0 2px;
}
.title-text {
  flex: 1;
  color: #9a9a9a;
  font-family: "Liberation Sans", "Noto Sans CJK SC", sans-serif;
  font-size: 14px;
  white-space: nowrap;
  overflow: hidden;
}
.win-btns {
  flex: none;
  display: flex;
  gap: 35px;
  padding: 0 20px 0 0;
}
.win-btns svg {
  width: 11px;
  height: 11px;
}

/* menu row */
.menubar {
  flex: none;
  display: flex;
  align-items: center;
  height: 31px;
  padding-left: 937px;
}
.help-tab {
  width: 188px;
  height: 28px;
  padding-right: 6px;
  box-sizing: border-box;
  line-height: 28px;
  text-align: center;
  letter-spacing: 0.3px;
  color: #006070;
  border-radius: 3px;
  background: linear-gradient(#fafafa, #f4f4f4);
}
.account {
  display: flex;
  align-items: center;
  width: 241px;
  box-sizing: border-box;
  padding-left: 5px;
  height: 28px;
  background: linear-gradient(#f8f8f8, #f2f2f2);
}
.phone {
  margin-left: 4px;
  font: 13px "Liberation Sans", sans-serif;
}
.phone-caret {
  margin-left: 7px;
}
.beans {
  margin-left: 9px;
}
.bell {
  margin-left: 9px;
}
.menu-more {
  margin-left: auto;
  margin-right: 3px;
}
.more {
  font: bold 12px/10px "Liberation Sans", sans-serif;
  align-self: flex-start;
  margin-top: 2px;
  color: #222;
}

/* toolbars */
.toprow {
  flex: none;
  display: flex;
  height: 26px;
}
.band {
  display: flex;
  align-items: center;
  gap: 7px;
  flex: none;
  border-radius: 3px;
  background: linear-gradient(#fafafa, #f2f2f2);
  white-space: nowrap;
  overflow: hidden;
}
.band-files {
  width: 150px;
  margin-left: 2px;
  padding-left: 3px;
  gap: 6px;
  box-sizing: border-box;
}
.band-files .caret {
  margin-left: 6px;
}
.band-files .more {
  margin-left: auto;
  margin-right: 4px;
}
.band-main {
  width: 342px;
  margin-left: 1px;
  padding-left: 4px;
  box-sizing: border-box;
}
.band-topright {
  margin-left: auto;
  width: 522px;
  box-sizing: border-box;
  padding-left: 10px;
  gap: 7px;
}
.band-topright .more {
  margin-left: auto;
  margin-right: 3px;
}
.sigma {
  flex: none;
  width: 16px;
  text-align: center;
  font: bold 14px "Liberation Sans", sans-serif;
}
.tool {
  display: flex;
  flex: none;
  align-items: center;
  gap: 4px;
}
.tool.on {
  height: 21px;
  padding: 0 3px 0 2px;
  border: 1px solid #0078d7;
  background: #e0eefa;
}
.grip + .tool.on {
  margin-left: -3px;
}
.tool.arrow-only {
  margin-left: -9px;
}
.tool.faded {
  color: #a0a0a0;
}
.caret {
  flex: none;
  width: 0;
  height: 0;
  margin-left: 4px;
  border: 3px solid transparent;
  border-top: 4px solid #222;
  border-bottom: 0;
}
.caret.near {
  margin-left: 1px;
}
.caret.dim {
  border-top-color: #aaa;
}
.sep {
  flex: none;
  width: 1px;
  height: 19px;
  margin: 0 -1px;
  background: #b8b8b8;
}
.grip {
  flex: none;
  width: 3px;
  height: 16px;
  margin: 0 -1px 0 2px;
  background: repeating-linear-gradient(#bbb 0 2px, transparent 2px 4px);
}

.main {
  flex: 1;
  display: flex;
  min-height: 0;
  margin-top: 4px;
}

/* left navigation */
.nav {
  flex: none;
  display: flex;
  flex-direction: column;
  width: 171px;
  box-sizing: border-box;
  padding-bottom: 2px;
  border-right: 1px solid #a8a8a8;
}
.nav-head {
  position: relative;
  flex: none;
  height: 16px;
  box-sizing: border-box;
  line-height: 14px;
  padding-left: 1px;
  border: 1px solid #a8a8a8;
  border-radius: 2px;
  letter-spacing: 1px;
}
.nav-pin,
.nav-close {
  position: absolute;
  top: 2px;
  width: 9px;
  height: 9px;
}
.nav-pin {
  left: 139px;
}
.nav-close {
  left: 157px;
}
.nav-btn {
  flex: none;
  height: 22px;
  line-height: 20px;
  text-align: center;
  border: 1px solid #a8a8a8;
  box-sizing: border-box;
  margin-top: 1px;
}
.nav-btn.pressed {
  border: 2px solid #a0a0a0;
  border-bottom-color: #c8c8c8;
  line-height: 18px;
}
.nav-tools {
  flex: none;
  display: flex;
  gap: 5px;
  height: 27px;
  align-items: center;
  padding-left: 7px;
}
.nav-tools svg {
  width: 18px;
  height: 18px;
}
.tree {
  flex: 1;
  margin: 0 1px 1px 2px;
  padding-top: 1px;
  background: #fff;
  border: 1px solid #a8a8a8;
  min-height: 0;
}
.node {
  position: relative;
  display: flex;
  align-items: center;
  height: 16px;
  padding-left: 7px;
}
.chev {
  flex: none;
  width: 9px;
  height: 9px;
}
.folder {
  margin: 0 3px 0 6px;
}
.node.sub {
  padding-left: 41px;
}
.node.sub::before {
  content: "";
  position: absolute;
  left: 31px;
  top: 8px;
  width: 9px;
  border-top: 1px dotted #666;
}
.node.sub::after {
  content: "";
  position: absolute;
  left: 31px;
  top: -8px;
  height: 16px;
  border-left: 1px dotted #666;
}
.leaf {
  margin-right: 4px;
}
.node-label {
  padding: 0 2px;
  white-space: nowrap;
}
.node-label.picked {
  background: #d9d9d9;
  padding-right: 14px;
}
.cad-ic {
  flex: none;
  width: 14px;
  height: 14px;
  margin-left: 4px;
}
.new-tag {
  position: relative;
  top: -5px;
  padding: 0 1px;
  background: #ffe600;
  font: bold 8px/8px "Liberation Sans", sans-serif;
}

/* work area */
.work {
  flex: 1;
  display: flex;
  flex-direction: column;
  min-width: 0;
  margin-left: 4px;
}
.tbrow {
  flex: none;
  display: flex;
  height: 25px;
  margin-bottom: 3px;
}
.tbrow:nth-child(4) {
  margin-bottom: 0;
}
.left-band {
  width: 319px;
  padding-left: 0;
  box-sizing: border-box;
}
.left-band.tight {
  gap: 3px;
}
.tight .grip {
  margin-right: 1px;
}
.right-band {
  margin-left: auto;
  padding-left: 8px;
  padding-right: 4px;
  box-sizing: border-box;
}
.mr400 {
  margin-right: 400px;
}
.mr358 {
  margin-right: 3px;
}
.mr123 {
  margin-right: 123px;
  padding-right: 5px;
}
.mr123 .caret {
  margin-left: 2px;
}
.stub {
  width: 30px;
  margin-right: 325px;
}
.combo {
  display: flex;
  flex: none;
  align-items: center;
  justify-content: space-between;
  box-sizing: border-box;
  width: 69px;
  height: 22px;
  padding: 0 4px 0 2px;
  background: linear-gradient(90deg, #fff 80%, #f2f2f2 80%);
}
.combo.short {
  width: 57px;
}
.combo.latin span {
  font: 12px "Liberation Sans", sans-serif;
}
.canvas {
  flex: none;
  display: block;
  width: 1191px;
  height: 482px;
  background: #000;
}
.dim {
  fill: #c8c8c8;
  font: 15px "Liberation Sans", sans-serif;
}
.bubble {
  text-anchor: middle;
}
.axis {
  font: 12px "Liberation Sans", sans-serif;
}
.axis-y {
  fill: #00ff00;
}
.axis-x {
  fill: #ff0000;
}
.bottomrow {
  height: 29px;
  margin: 1px 0 0;
}
.bb-a {
  width: 210px;
  box-sizing: border-box;
  gap: 4px;
}
.bb-a .grip {
  margin-right: 2px;
}
.bb-b {
  width: 110px;
  margin-left: 1px;
  box-sizing: border-box;
  gap: 5px;
}
.bb-b .grip {
  margin-right: 1px;
}
.bb-c {
  margin-left: auto;
  margin-right: 303px;
  width: 191px;
  box-sizing: border-box;
  padding-left: 0;
  gap: 3px;
  justify-content: flex-end;
  padding-right: 3px;
}
.spin {
  display: flex;
  align-items: center;
  justify-content: space-between;
  box-sizing: border-box;
  width: 68px;
  height: 22px;
  padding: 0 4px 0 10px;
  border: 1px solid #a8a8a8;
  color: #777;
  font: 12px "Liberation Sans", sans-serif;
}
.spin.small {
  width: 32px;
}
.spin-arrows {
  flex: none;
  width: 6px;
  height: 14px;
}
.unit {
  color: #666;
  font: 12px "Liberation Sans", sans-serif;
}
.deg {
  align-self: flex-start;
  margin-top: 3px;
}
.check {
  flex: none;
  width: 10px;
  height: 10px;
  margin: 0 5px 0 5px;
  border: 1px solid #999;
  background: #fff;
}
.rot-label {
  margin-right: 1px;
}

/* status bar */
.status {
  flex: none;
  display: flex;
  height: 22px;
  gap: 2px;
  padding: 1px 2px 0 1px;
  box-sizing: border-box;
}
.cell {
  height: 21px;
  line-height: 19px;
  padding-left: 1px;
  box-sizing: border-box;
  border: 1px solid #d8d8d8;
  white-space: nowrap;
  overflow: hidden;
}
.c1 { width: 147px; }
.c2 { width: 78px; }
.c3 { width: 98px; }
.c4 { width: 48px; }
.c5 { flex: 1; }
.c6 { width: 69px; }

/* taskbar */
.taskbar {
  flex: none;
  display: flex;
  align-items: stretch;
  height: 40px;
  background: #05090d;
}
.start {
  display: flex;
  flex: none;
  align-items: center;
  justify-content: center;
  width: 48px;
  background: #000;
}
.start svg {
  width: 16px;
  height: 16px;
}
.search {
  display: flex;
  flex: none;
  align-items: center;
  width: 344px;
  box-sizing: border-box;
  padding-left: 10px;
  background: #333;
}
.cortana {
  flex: none;
  width: 12px;
  height: 12px;
  border: 4px solid #e8e8e8;
  border-radius: 50%;
}
.search-text {
  flex: 1;
  margin-left: 6px;
  color: #8a949c;
  font-size: 14px;
}
.search svg {
  flex: none;
  width: 16px;
  height: 16px;
  margin-right: 13px;
}
.slot {
  display: flex;
  flex: none;
  align-items: center;
  justify-content: center;
  width: 49px;
  box-sizing: border-box;
  border-bottom: 2px solid transparent;
}
.slot svg {
  width: 24px;
  height: 24px;
}
.slot.wide {
  width: 57px;
}
.slot.running {
  border-bottom-color: #9cc4e8;
  padding: 0 4px;
}
.slot.active {
  background: #33393e;
  border-bottom-color: #9cc4e8;
}
.tray {
  display: flex;
  flex: 1;
  align-items: center;
  color: #ddd;
  padding-left: 87px;
}
.tray svg {
  flex: none;
  height: 22px;
}
.tray-text {
  flex: none;
  width: 28px;
}
.t24 { width: 24px; }
.t22 { width: 22px; }
.t30 { width: 30px; }
.t28 { width: 28px; }
.tray-zh {
  flex: none;
  width: 28px;
  text-align: center;
  color: #fff;
  font-size: 13px;
}
.clock {
  display: flex;
  flex: none;
  flex-direction: column;
  align-items: center;
  width: 84px;
  color: #e8e8e8;
  line-height: 19px;
}
.notif {
  margin-left: 1px;
}

/* overlays */
.badge71 {
  position: absolute;
  left: 1113px;
  top: -30px;
  width: 48px;
  height: 48px;
  display: flex;
  align-items: flex-end;
  justify-content: center;
  border-radius: 50%;
  background: #2db84d;
  box-shadow: 0 0 0 1px #ccc, 0 1px 5px rgba(0, 0, 0, 0.4);
  color: #fff;
  font: bold 11px/16px "Liberation Sans", sans-serif;
}
.badge71 span {
  margin-bottom: 3px;
}
.dialog {
  position: absolute;
  left: 493px;
  top: 13px;
  display: flex;
  flex-direction: column;
  box-sizing: border-box;
  width: 378px;
  height: 693px;
  padding: 0 1px;
  background: #fff;
  border-top: 1px solid #0078d7;
  box-shadow: 0 2px 10px rgba(0, 0, 0, 0.45);
}
.dlg-title {
  display: flex;
  flex: none;
  align-items: flex-start;
  justify-content: space-between;
  height: 30px;
  padding: 5px 0 0 7px;
  box-sizing: border-box;
}
.dlg-close {
  width: 19px;
  height: 19px;
  margin: 1px -1px 0 0;
  text-align: center;
  color: #fff;
  background: #c75050;
  font: bold 11px/18px "Liberation Sans", sans-serif;
}
.grid {
  flex: none;
  width: 375px;
  border-right: 1px solid #c0c0c0;
  border-bottom: 1px solid #c0c0c0;
}
.grow {
  display: flex;
  height: 19px;
  box-sizing: border-box;
  border-bottom: 1px solid #c0c0c0;
  line-height: 20px;
}
.grow.head {
  height: 24px;
  line-height: 24px;
  border-top: 1px solid #c0c0c0;
}
.gnum {
  flex: none;
  width: 22px;
  box-sizing: border-box;
  border-right: 1px solid #c0c0c0;
  text-align: center;
  color: #111;
  background: #f0f0f0;
  font: 11px/18px "Liberation Sans", sans-serif;
}
.gname {
  position: relative;
  flex: none;
  width: 121px;
  box-sizing: border-box;
  padding-left: 20px;
  border-right: 1px solid #c0c0c0;
  white-space: nowrap;
}
.gval {
  flex: 1;
  position: relative;
  padding-left: 2px;
  white-space: nowrap;
}
.hname {
  padding: 0;
  text-align: center;
  background: linear-gradient(#fafafa, #e8e8e8);
}
.hval {
  padding: 0;
  text-align: center;
  color: #600070;
  background: linear-gradient(#fbdc9c, #f4bf60);
}
.head .gnum {
  background: linear-gradient(#f8f8f8, #ececec);
}
.grey {
  color: #808080;
}
.soft {
  color: #909090;
}
.blue {
  color: #0000ff;
}
.child {
  padding-left: 30px;
}
.child::before {
  content: "";
  position: absolute;
  left: 8px;
  top: -1px;
  height: 19px;
  border-left: 1px solid #c0c0c0;
}
.child.lastchild::before {
  height: 10px;
}
.child::after {
  content: "";
  position: absolute;
  left: 9px;
  top: 9px;
  width: 16px;
  border-top: 1px solid #c0c0c0;
}
.xbox {
  position: absolute;
  left: 3px;
  top: 3px;
  width: 10px;
  height: 10px;
  border: 1px solid #c0c0c0;
  font: 11px/10px "Liberation Sans", sans-serif;
  text-align: center;
  color: #222;
}
.selected .gnum {
  color: #600070;
  background: #ffd78f;
}
.selected .gname {
  color: #fff;
  background: #0078d7;
}
.ell {
  position: absolute;
  right: 1px;
  top: 1px;
  width: 15px;
  height: 14px;
  border: 1px solid #aaa;
  background: #e2e2e2;
  color: #111;
  font: bold 11px/13px "Liberation Sans", sans-serif;
  text-align: center;
}
.sogou {
  position: absolute;
  left: 540px;
  top: 30px;
  display: flex;
  align-items: center;
  gap: 6px;
  width: 188px;
  height: 23px;
  box-sizing: border-box;
  padding-left: 15px;
  background: #ebf2fa;
  border: 1px solid #c4d4e6;
}
.sg-zh {
  color: #1a78c8;
  font-size: 14px;
  font-weight: 700;
  margin-right: 2px;
}
.sg-ic {
  flex: none;
  width: 16px;
  height: 16px;
}
.sg-logo {
  position: absolute;
  left: 524px;
  top: 27px;
  width: 24px;
  height: 27px;
}
.ring {
  position: absolute;
  left: 476px;
  top: 358px;
  width: 272px;
  height: 38px;
}
</style>

<style>
html, body { margin: 0; background: #f0f0f0; overflow: hidden; }
</style>
